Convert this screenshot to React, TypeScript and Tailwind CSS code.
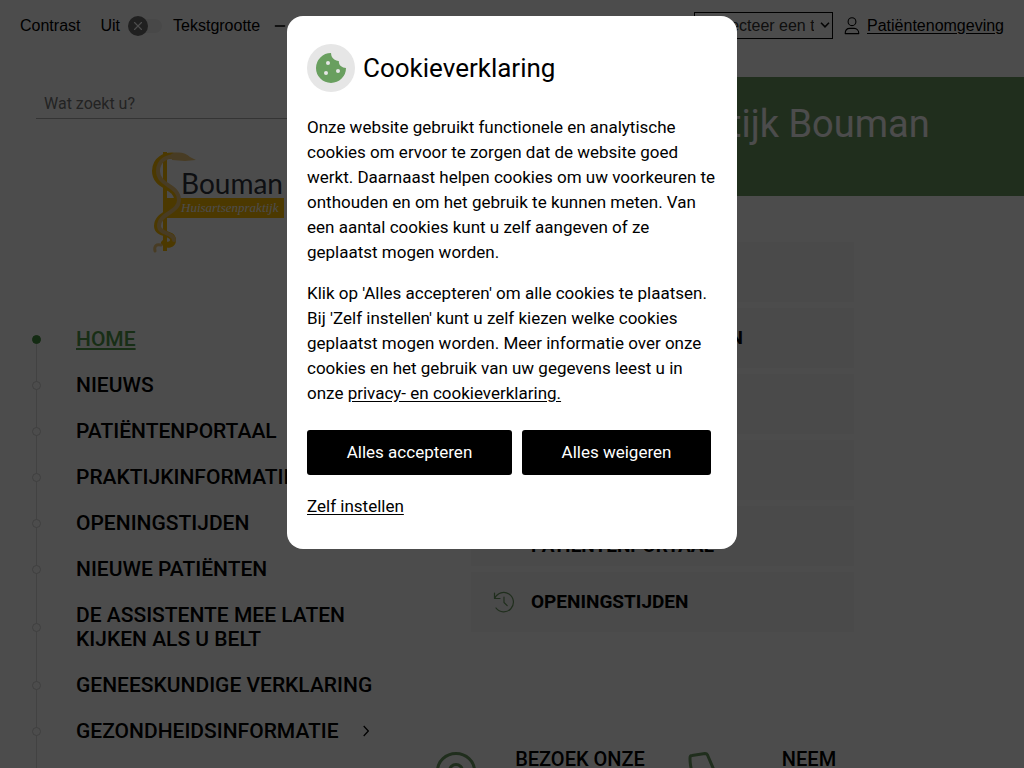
import { type ReactNode } from "react";
import { Minus, Plus, X } from "lucide-react";
import clsx from "clsx";

const navItems = [
  { label: "Home", active: true },
  { label: "Nieuws" },
  { label: "Patiëntenportaal" },
  { label: "Praktijkinformatie", sub: true },
  { label: "Openingstijden" },
  { label: "Nieuwe patiënten" },
  { label: "De assistente mee laten kijken als u belt" },
  { label: "Geneeskundige verklaring" },
  { label: "Gezondheidsinformatie", sub: true },
];

const quickLinks = [
  "Afspraak maken",
  "Recepten aanvragen",
  "E-consult",
  "Inschrijven",
  "Inloggen patiëntenportaal",
  "Openingstijden",
];

function HistoryIcon() {
  return (
    <svg viewBox="0 0 22 22" className="h-[22px] w-[22px] shrink-0" fill="none" stroke="#6b9a61" strokeWidth="1.2" strokeLinecap="round" strokeLinejoin="round">
      <path d="M1.5 2v5.5H7M1.8 7.3A9.7 9.7 0 1 1 3 17" />
      <path d="M11 6v5.5l3.2 3.2" />
    </svg>
  );
}

function UserIcon() {
  return (
    <svg viewBox="0 0 16 18" className="h-[18px] w-4" fill="none" stroke="#000" strokeWidth="1.1" strokeLinejoin="round">
      <circle cx="8" cy="4.7" r="3.9" />
      <path d="M1.2 16.6c0-3.3 2-5.2 4.6-5.2h4.4c2.6 0 4.6 1.9 4.6 5.2Z" />
    </svg>
  );
}

function CookieIcon() {
  return (
    <svg viewBox="0 0 48 48" className="h-12 w-12 shrink-0">
      <circle cx="24" cy="24" r="24" fill="#e6e6e6" />
      <path
        d="M24 9a15 15 0 1 0 15 15c-2 0-3.8-.6-5.2-1.9-1.3-1.3-2-3-2-5.2-1.4.1-3-.2-4.500-1.300C25.300 14 24.200 12.400 24 9Z"
        fill="#699f5f"
      />
      <g fill="#e6e6e6">
        <circle cx="21" cy="19" r="2" />
        <circle cx="19" cy="29" r="2" />
        <circle cx="31" cy="27" r="2" />
      </g>
    </svg>
  );
}

function Logo() {
  return (
    <svg viewBox="0 0 134 104" className="h-[104px] w-[134px]" role="img" aria-label="Bouman Huisartsenpraktijk">
      <rect x="12" y="1" width="4" height="99" fill="#ffbe00" />
      <rect x="12" y="47" width="121" height="20" fill="#ffbe00" />
      <g fill="none" strokeLinecap="round">
        <path d="M26 5C13 3 4 9 4 20c0 17 22 14 22 29 0 13-20 13-20 26 0 9 16 6 16 14 0 5-6 6-9 3" stroke="#ffbe00" strokeWidth="6" />
        <path d="M28 5C15 4 7 10 7 20c0 15 21 14 21 29 0 13-20 13-20 26 0 8 15 7 15 14" stroke="#f0c878" strokeWidth="4" />
        <path d="M10 94c-5-1-7 1-6 6" stroke="#f0c878" strokeWidth="3" />
      </g>
      <path d="M20 3c8-3 15-1 19 3l6 3-11 1-13-1Z" fill="#f0c878" />
      <text x="30" y="43" fontSize="28" fill="#30353d" className="font-[Lato,sans-serif]">
        Bouman
      </text>
      <text x="30" y="61" fontSize="13" fontStyle="italic" fill="#fff" className="font-['Liberation_Serif',serif]">
        Huisartsenpraktijk
      </text>
    </svg>
  );
}

function TopBar() {
  return (
    <div className="flex h-[51px] items-center px-5 font-['Liberation_Sans',Arial,sans-serif] text-base">
      <span>Contrast</span>
      <span className="ml-5">Uit</span>
      <button type="button" role="switch" aria-checked="false" aria-label="Contrast" className="ml-2 flex h-[14px] w-[34px] items-center rounded-full bg-[#f0f0f0]">
        <span className="flex h-5 w-5 shrink-0 items-center justify-center rounded-full bg-[#6b6b6b] text-white">
          <X size={14} strokeWidth={2} />
        </span>
      </button>
      <span className="ml-[11px]">Tekstgrootte</span>
      <button type="button" aria-label="Tekst verkleinen" className="ml-3">
        <Minus size={16} />
      </button>
      <span className="mx-2">100%</span>
      <button type="button" aria-label="Tekst vergroten">
        <Plus size={16} />
      </button>
      <div className="relative ml-auto">
        <select aria-label="Taal" className="h-[27px] w-[139px] appearance-none border border-black pl-3 pr-[18px] text-[#333]">
          <option>Selecteer een taal</option>
        </select>
        <svg viewBox="0 0 10 6" className="pointer-events-none absolute right-[3px] top-[10px] h-[6px] w-[10px]" fill="none" stroke="#111" strokeWidth="1.6">
          <path d="m1 .8 4 4 4-4" />
        </svg>
      </div>
      <a href="#omgeving" className="ml-[11px] flex items-center gap-[7px] underline underline-offset-2">
        <UserIcon />
        Patiëntenomgeving
      </a>
    </div>
  );
}

function SideNav() {
  return (
    <nav className="relative mt-[61px] pb-10">
      <div className="absolute bottom-0 left-0 top-[23px] w-px bg-[#dcdcdc]" />
      <ul>
        {navItems.map((item) => (
          <li key={item.label} className="relative flex items-center">
            <span
              className={clsx(
                "-ml-1 h-[9px] w-[9px] shrink-0 rounded-full border",
                item.active ? "border-[#449040] bg-[#449040]" : "border-[#d4d4d4] bg-white"
              )}
            />
            <a
              href="#pagina"
              className={clsx(
                "ml-[35px] max-w-[310px] py-[11px] text-[21px] font-medium uppercase leading-6",
                item.active && "text-[#529a4a] underline decoration-2 underline-offset-2"
              )}
            >
              {item.label}
            </a>
            {item.sub && (
              <svg viewBox="0 0 6 12" className="ml-6 h-3 w-[6px] shrink-0" fill="none" stroke="#000" strokeWidth="1.2">
                <path d="m.7 1 4.6 5-4.6 5" />
              </svg>
            )}
          </li>
        ))}
      </ul>
    </nav>
  );
}

function InfoBlock({ icon, children }: { icon: ReactNode; children: ReactNode }) {
  return (
    <a href="#info" className="flex items-start">
      {icon}
      <span className="-mt-[5px] flex-1 text-center text-[20px] font-medium uppercase leading-6">{children}</span>
    </a>
  );
}

function CookieDialog() {
  return (
    <div className="fixed inset-0 flex items-start justify-center bg-black/70 px-4 pt-4">
      <div role="dialog" aria-modal="true" aria-labelledby="cookie-title" className="w-full max-w-[450px] rounded-2xl bg-white px-5 pb-[30px] pt-7">
        <div className="flex items-center gap-2">
          <CookieIcon />
          <h2 id="cookie-title" className="text-[26px]">Cookieverklaring</h2>
        </div>
        <div className="mt-[23px] space-y-4 text-[17px] leading-[25px]">
          <p>
            Onze website gebruikt functionele en analytische
            <br />
            cookies om ervoor te zorgen dat de website goed
            <br />
            werkt. Daarnaast helpen cookies om uw voorkeuren te
            <br />
            onthouden en om het gebruik te kunnen meten. Van
            <br />
            een aantal cookies kunt u zelf aangeven of ze
            <br />
            geplaatst mogen worden.
          </p>
          <p>
            Klik op 'Alles accepteren' om alle cookies te plaatsen.
            <br />
            Bij 'Zelf instellen' kunt u zelf kiezen welke cookies
            <br />
            geplaatst mogen worden. Meer informatie over onze
            <br />
            cookies en het gebruik van uw gegevens leest u in
            <br />
            onze <a href="#privacy" className="underline underline-offset-2">privacy- en cookieverklaring.</a>
          </p>
        </div>
        <div className="mt-6 flex gap-[10px] text-[17px] text-white">
          <button type="button" className="h-[45px] w-[205px] rounded-[3px] bg-black">Alles accepteren</button>
          <button type="button" className="h-[45px] w-[189px] rounded-[3px] bg-black">Alles weigeren</button>
        </div>
        <button type="button" className="mt-[19px] block text-[17px] leading-[25px] underline underline-offset-2">Zelf instellen</button>
      </div>
    </div>
  );
}

export default function App() {
  return (
    <div className="h-screen overflow-hidden bg-white font-[Roboto,sans-serif] text-base text-black">
      <TopBar />
      <div className="mt-[26px] grid grid-cols-[436px_1fr]">
        <aside className="px-9">
          <input
            type="search"
            aria-label="Zoeken"
            placeholder="Wat zoekt u?"
            className="mt-[11px] h-[31px] w-full border-b border-[#b0b0b0] px-2 placeholder:text-[#757575]"
          />
          <div className="mt-8 flex justify-center">
            <Logo />
          </div>
          <SideNav />
        </aside>
        <main>
          <header className="h-[119px] bg-[#6b9a61] px-[35px] pt-6">
            <h1 className="whitespace-nowrap text-[38px] leading-[46px] text-white">Huisartsenpraktijk Bouman</h1>
          </header>
          <ul className="ml-[35px] mr-[170px] mt-[46px] space-y-[6px]">
            {quickLinks.map((label) => (
              <li key={label}>
                <a href="#snel" className="flex h-[60px] items-center gap-4 bg-[#f7f7f7] px-[22px] text-[19px] font-bold uppercase leading-5">
                  <HistoryIcon />
                  <span className="max-w-[240px]">{label}</span>
                </a>
              </li>
            ))}
          </ul>
          <div className="mt-[120px] grid grid-cols-[248px_198px] gap-1">
            <InfoBlock
              icon={
                <svg viewBox="0 0 40 50" className="h-[50px] w-10 shrink-0" fill="none" stroke="#6b9a61" strokeWidth="3">
                  <path d="M20 48C8 34 1.5 27 1.5 19a18.5 17.5 0 0 1 37 0C38.5 27 32 34 20 48Z" />
                  <circle cx="20" cy="19" r="6.5" />
                </svg>
              }
            >
              Bezoek onze
              <br />
              locatie
            </InfoBlock>
            <InfoBlock
              icon={
                <svg viewBox="0 0 44 50" className="h-[50px] w-11 shrink-0" fill="none" stroke="#6b9a61" strokeWidth="3" strokeLinejoin="round">
                  <path d="M4 3.500 17 1.500c1 0 2 .5 2.500 1.500l6 14-6 6c3 6 7 9 12 12l6-5 10 5v10C20 47 2 30 2 6c0-1.500.5-2.500 2-2.500Z" />
                </svg>
              }
            >
              Neem
              <br />
              contact op
            </InfoBlock>
          </div>
        </main>
      </div>
      <CookieDialog />
    </div>
  );
}
